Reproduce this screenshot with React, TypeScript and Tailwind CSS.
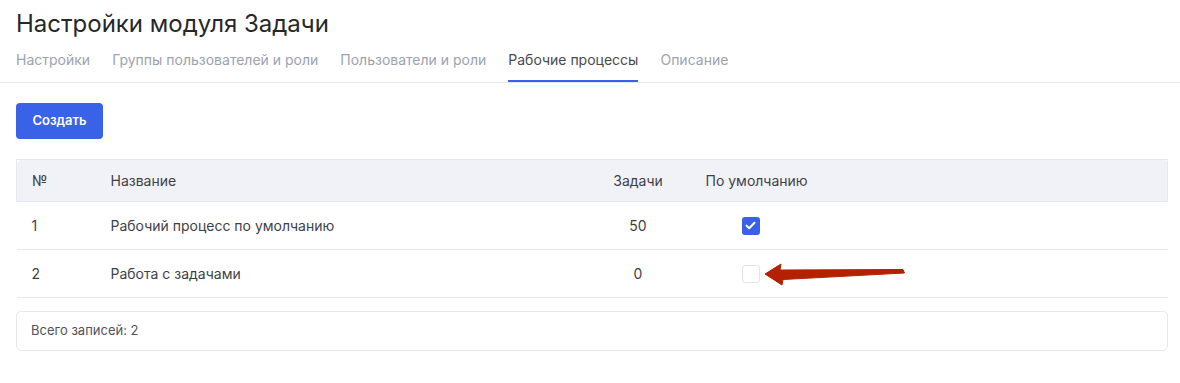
const tabs = ['Настройки', 'Группы пользователей и роли', 'Пользователи и роли', 'Рабочие процессы', 'Описание']

const rows = [
  { n: 1, name: 'Рабочий процесс по умолчанию', tasks: 50, def: true },
  { n: 2, name: 'Работа с задачами', tasks: 0, def: false },
]

function Check({ on }: { on: boolean }) {
  if (on) {
    return (
      <span className="inline-flex h-[18px] w-[18px] items-center justify-center rounded-[3px] bg-[#3a60e6]">
        <svg width="11" height="9" viewBox="0 0 11 9" fill="none">
          <path d="M1.5 4.6 4.2 7.2 9.5 1.8" stroke="white" strokeWidth="2" strokeLinecap="round" strokeLinejoin="round" />
        </svg>
      </span>
    )
  }
  return <span className="inline-block h-[18px] w-[18px] rounded-[3px] border border-[#e1e4ec] bg-white" />
}

export default function App() {
  return (
    <div className="relative min-h-[383px] bg-white font-['Inter',sans-serif] text-[#3f3f46]">
      {/* Header + tabs */}
      <div className="border-b border-[#e6e8ef]">
        <h1 className="px-4 pt-2 text-[24px] leading-8 font-normal text-[#27272a]">Настройки модуля Задачи</h1>
        <div className="mt-[10px] flex gap-[22px] px-4">
          {tabs.map((t) => {
            const active = t === 'Рабочие процессы'
            return (
              <div
                key={t}
                className={
                  active
                    ? 'border-b-2 border-[#3a60e6] pb-[10px] text-[14px] leading-5 text-[#4a4a4f]'
                    : 'border-b-2 border-transparent pb-[10px] text-[14px] leading-5 text-[#9ca3af]'
                }
              >
                {t}
              </div>
            )
          })}
        </div>
      </div>

      <div className="pl-4 pr-3 pt-5">
        <button className="h-9 w-[87px] rounded-[4px] bg-[#3a62e8] text-[13px] font-semibold text-white">Создать</button>

        {/* Table */}
        <table className="mt-5 w-full table-fixed border-collapse text-[14px]">
          <colgroup>
            <col className="w-[79px]" />
            <col className="w-[495px]" />
            <col className="w-[95px]" />
            <col className="w-[130px]" />
            <col />
          </colgroup>
          <thead>
            <tr className="bg-[#f1f2f8]">
              <th className="h-[42px] rounded-tl-[5px] border-y border-l border-[#e6e8ef] pl-[15px] text-left font-normal text-[#3f3f46]">№</th>
              <th className="border-y border-[#e6e8ef] pl-[15px] text-left font-normal text-[#3f3f46]">Название</th>
              <th className="border-y border-[#e6e8ef] text-center font-normal text-[#3f3f46]">Задачи</th>
              <th className="border-y border-[#e6e8ef] pl-5 text-left font-normal text-[#3f3f46]">По умолчанию</th>
              <th className="rounded-tr-[5px] border-y border-r border-[#e6e8ef]" />
            </tr>
          </thead>
          <tbody>
            {rows.map((r) => (
              <tr key={r.n} className="border-b border-[#e6e8ef]">
                <td className="h-[48px] pl-[15px] text-[#3f3f46]">{r.n}</td>
                <td className="pl-[15px] text-[#3f3f46]">{r.name}</td>
                <td className="text-center text-[#3f3f46]">{r.tasks}</td>
                <td className="pl-[56px] align-middle">
                  <div className="flex">
                    <Check on={r.def} />
                  </div>
                </td>
                <td />
              </tr>
            ))}
          </tbody>
        </table>

        {/* Footer */}
        <div className="mt-[13px] flex h-10 items-center rounded-[5px] border border-[#e6e8ef] px-[14px] text-[13px] text-[#52525b]">
          Всего записей: 2
        </div>
      </div>

      {/* Annotation arrow */}
      <svg className="absolute left-[760px] top-[258px]" width="150" height="32" viewBox="0 0 150 32">
        <polygon points="5,16 21,6 20,12 143,11.5 144.5,15 23,21.5 22,27" fill="#b32100" strokeLinejoin="round" stroke="#b32100" strokeWidth="1" />
      </svg>
    </div>
  )
}
